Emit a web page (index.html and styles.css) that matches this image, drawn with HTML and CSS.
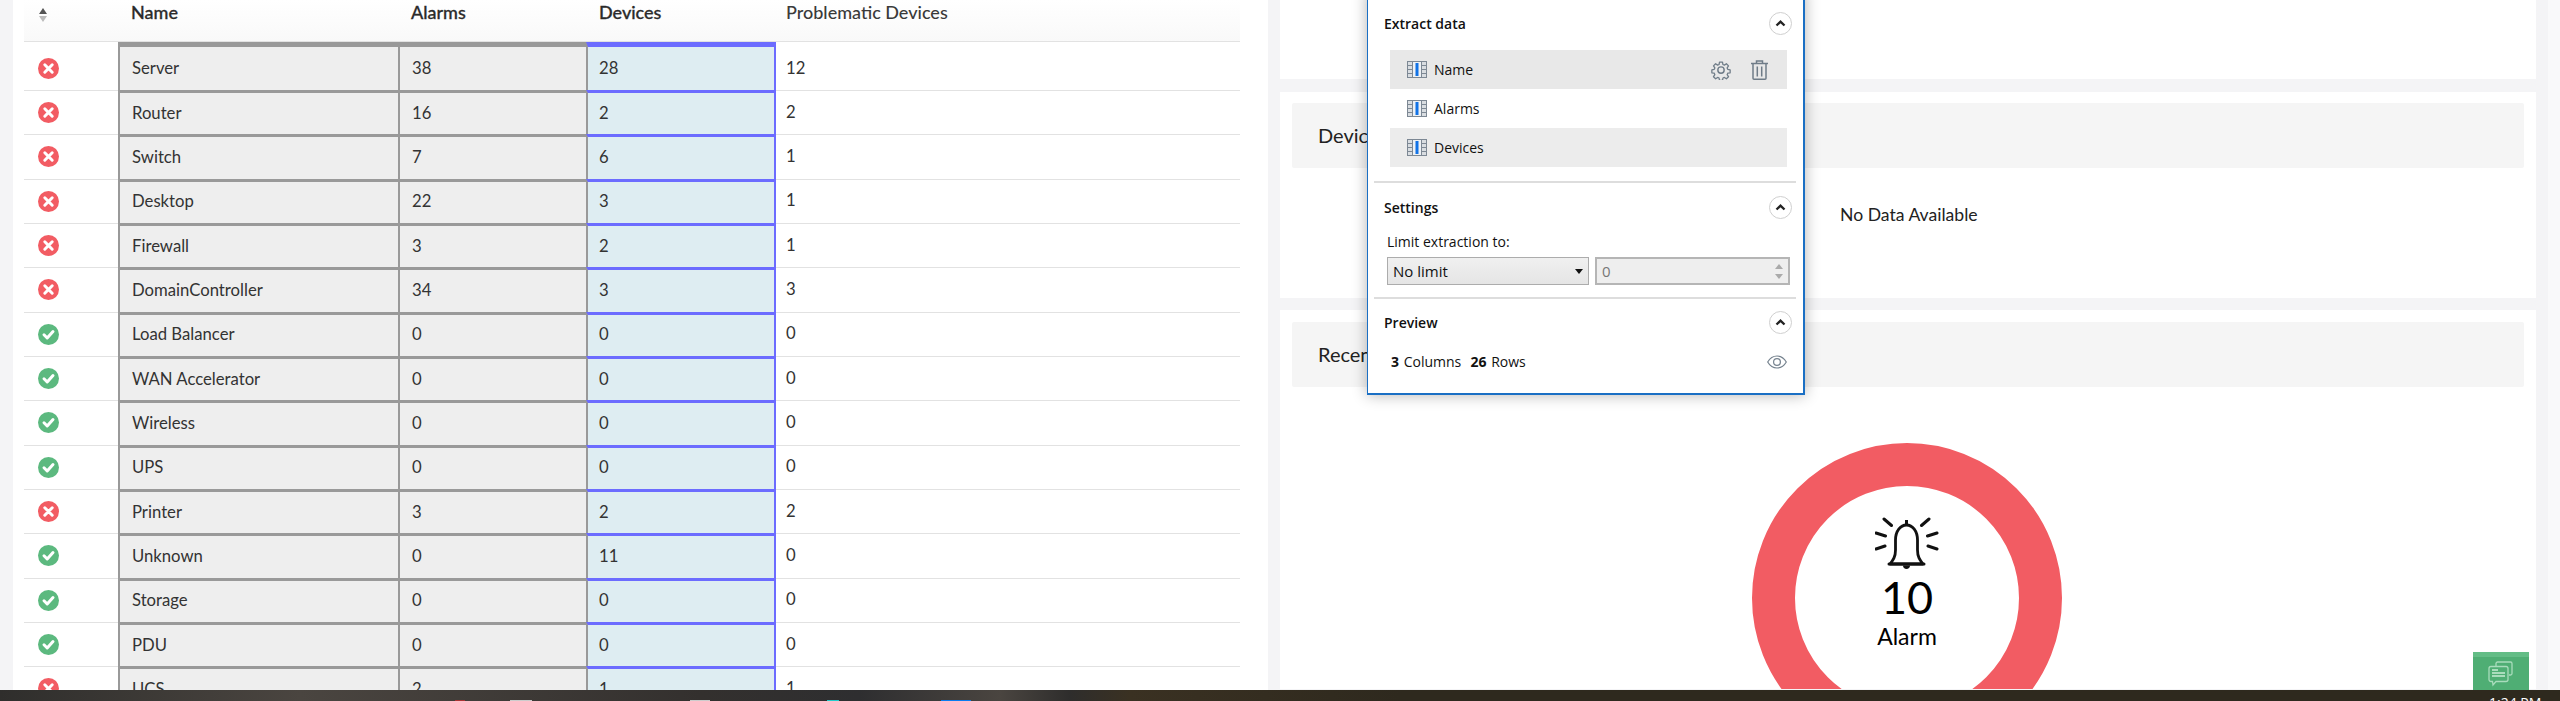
FILE: index.html
```html
<!DOCTYPE html>
<html lang="en">
<head>
    <meta charset="UTF-8">
    <title>Device Summary</title>
    <link rel="stylesheet" href="styles.css">
</head>
<body>
    <svg class="sprites" width="0" height="0">
        <symbol id="icon-bad" viewBox="0 0 21 21">
            <circle cx="10.5" cy="10.5" r="10.5" fill="#f25c63"/>
            <path d="M6.8 6.8l7.4 7.4M14.2 6.8l-7.4 7.4" stroke="#fff" stroke-width="3" stroke-linecap="round"/>
        </symbol>
        <symbol id="icon-ok" viewBox="0 0 21 21">
            <circle cx="10.5" cy="10.5" r="10.5" fill="#5cb97f"/>
            <path d="M6 10.8l3.2 3.2 5.8-6.4" fill="none" stroke="#fff" stroke-width="3" stroke-linecap="round" stroke-linejoin="round"/>
        </symbol>
        <symbol id="icon-col" viewBox="0 0 20 17">
            <rect width="20" height="17" fill="#7d8894"/>
            <path d="M1 1h4v3H1zM1 5h4v3H1zM1 9h4v3H1zM1 13h4v3H1zM15 1h4v3h-4zM15 5h4v3h-4zM15 9h4v3h-4zM15 13h4v3h-4z" fill="#d9dde1"/>
            <rect x="6" y="1" width="8" height="15" fill="#eef1f4"/>
            <rect x="8.500" y="2" width="3" height="13" fill="#1273e6"/>
        </symbol>
        <symbol id="icon-up" viewBox="0 0 23 23">
            <circle cx="11.500" cy="11.500" r="11" fill="#fff" stroke="#cfcfcf"/>
            <path d="M7.500 13.500l4-3.800 4 3.800" fill="none" stroke="#222" stroke-width="2.400"/>
        </symbol>
    </svg>

    <div class="page">
        <section class="card-left">
            <div class="table-head">
                <div class="col-status">
                    <svg class="sort-icon" width="8" height="14" viewBox="0 0 8 14"><path d="M4 0l4 6H0z" fill="#555"/><path d="M4 14l4-6H0z" fill="#bbb"/></svg>
                </div>
                <div class="col-name">Name</div>
                <div class="col-alarms">Alarms</div>
                <div class="col-devices">Devices</div>
                <div class="col-problem head-light">Problematic Devices</div>
            </div>

            <div class="row row-first">
                <div class="col-status"><svg class="status-icon"><use href="#icon-bad"/></svg></div>
                <div class="col-name picked">Server</div>
                <div class="col-alarms picked">38</div>
                <div class="col-devices picked-blue">28</div>
                <div class="col-problem">12</div>
            </div>
            <div class="row">
                <div class="col-status"><svg class="status-icon"><use href="#icon-bad"/></svg></div>
                <div class="col-name picked">Router</div>
                <div class="col-alarms picked">16</div>
                <div class="col-devices picked-blue">2</div>
                <div class="col-problem">2</div>
            </div>
            <div class="row">
                <div class="col-status"><svg class="status-icon"><use href="#icon-bad"/></svg></div>
                <div class="col-name picked">Switch</div>
                <div class="col-alarms picked">7</div>
                <div class="col-devices picked-blue">6</div>
                <div class="col-problem">1</div>
            </div>
            <div class="row">
                <div class="col-status"><svg class="status-icon"><use href="#icon-bad"/></svg></div>
                <div class="col-name picked">Desktop</div>
                <div class="col-alarms picked">22</div>
                <div class="col-devices picked-blue">3</div>
                <div class="col-problem">1</div>
            </div>
            <div class="row">
                <div class="col-status"><svg class="status-icon"><use href="#icon-bad"/></svg></div>
                <div class="col-name picked">Firewall</div>
                <div class="col-alarms picked">3</div>
                <div class="col-devices picked-blue">2</div>
                <div class="col-problem">1</div>
            </div>
            <div class="row">
                <div class="col-status"><svg class="status-icon"><use href="#icon-bad"/></svg></div>
                <div class="col-name picked">DomainController</div>
                <div class="col-alarms picked">34</div>
                <div class="col-devices picked-blue">3</div>
                <div class="col-problem">3</div>
            </div>
            <div class="row">
                <div class="col-status"><svg class="status-icon"><use href="#icon-ok"/></svg></div>
                <div class="col-name picked">Load Balancer</div>
                <div class="col-alarms picked">0</div>
                <div class="col-devices picked-blue">0</div>
                <div class="col-problem">0</div>
            </div>
            <div class="row">
                <div class="col-status"><svg class="status-icon"><use href="#icon-ok"/></svg></div>
                <div class="col-name picked">WAN Accelerator</div>
                <div class="col-alarms picked">0</div>
                <div class="col-devices picked-blue">0</div>
                <div class="col-problem">0</div>
            </div>
            <div class="row">
                <div class="col-status"><svg class="status-icon"><use href="#icon-ok"/></svg></div>
                <div class="col-name picked">Wireless</div>
                <div class="col-alarms picked">0</div>
                <div class="col-devices picked-blue">0</div>
                <div class="col-problem">0</div>
            </div>
            <div class="row">
                <div class="col-status"><svg class="status-icon"><use href="#icon-ok"/></svg></div>
                <div class="col-name picked">UPS</div>
                <div class="col-alarms picked">0</div>
                <div class="col-devices picked-blue">0</div>
                <div class="col-problem">0</div>
            </div>
            <div class="row">
                <div class="col-status"><svg class="status-icon"><use href="#icon-bad"/></svg></div>
                <div class="col-name picked">Printer</div>
                <div class="col-alarms picked">3</div>
                <div class="col-devices picked-blue">2</div>
                <div class="col-problem">2</div>
            </div>
            <div class="row">
                <div class="col-status"><svg class="status-icon"><use href="#icon-ok"/></svg></div>
                <div class="col-name picked">Unknown</div>
                <div class="col-alarms picked">0</div>
                <div class="col-devices picked-blue">11</div>
                <div class="col-problem">0</div>
            </div>
            <div class="row">
                <div class="col-status"><svg class="status-icon"><use href="#icon-ok"/></svg></div>
                <div class="col-name picked">Storage</div>
                <div class="col-alarms picked">0</div>
                <div class="col-devices picked-blue">0</div>
                <div class="col-problem">0</div>
            </div>
            <div class="row">
                <div class="col-status"><svg class="status-icon"><use href="#icon-ok"/></svg></div>
                <div class="col-name picked">PDU</div>
                <div class="col-alarms picked">0</div>
                <div class="col-devices picked-blue">0</div>
                <div class="col-problem">0</div>
            </div>
            <div class="row">
                <div class="col-status"><svg class="status-icon"><use href="#icon-bad"/></svg></div>
                <div class="col-name picked">UCS</div>
                <div class="col-alarms picked">2</div>
                <div class="col-devices picked-blue">1</div>
                <div class="col-problem">1</div>
            </div>
        </section>

        <section class="column-right">
            <div class="card card-top"></div>
            <div class="card card-devices">
                <div class="band">Devices Summary</div>
                <div class="no-data">No Data Available</div>
            </div>
            <div class="card card-recent">
                <div class="band">Recent Alarms</div>
                <div class="ring">
                    <svg class="bell" width="64" height="52" viewBox="0 0 64 52">
                        <path d="M31.500 3v5" fill="none" stroke="#111" stroke-width="3"/>
                        <path d="M15 47c3-4 5.500-7 5.500-14V23c0-9 5-15 11-15s11 6 11 15v10c0 7 2.500 10 5.500 14z" fill="none" stroke="#111" stroke-width="2.800" stroke-linejoin="round"/>
                        <path d="M14 47h35" stroke="#111" stroke-width="3" stroke-linecap="round"/>
                        <path d="M28 48.500h7c0 2-1.500 3.500-3.500 3.500s-3.500-1.500-3.500-3.500z" fill="#111"/>
                        <path d="M9 2l7.500 6.500M54 2l-7.500 6.500M1 16l9.500 3M62 16l-9.500 3M1 32l9-3M62 32l-9-3" fill="none" stroke="#111" stroke-width="3" stroke-linecap="round"/>
                    </svg>
                    <div class="ring-count">10</div>
                    <div class="ring-label">Alarm</div>
                </div>
            </div>
        </section>
    </div>

    <!-- extractor panel sits on top of the dashboard -->
    <aside class="extract-panel">
        <div class="panel-head panel-head-extract">
            <span>Extract data</span>
            <svg class="toggle"><use href="#icon-up"/></svg>
        </div>
        <ul class="field-list">
            <li class="field field-hover">
                <svg class="field-icon"><use href="#icon-col"/></svg>
                <span class="field-name">Name</span>
                <svg class="tool-gear" width="20" height="20" viewBox="0 0 24 24" fill="none" stroke="#6f7c88" stroke-width="1.700" stroke-linejoin="round">
                    <circle cx="12" cy="12" r="3.800"/>
                    <path d="M10 1.500h4l.6 3.200 1.900.8 2.700-1.800 2.800 2.800-1.800 2.700.8 1.900 3.200.6v4l-3.200.6-.8 1.900 1.800 2.700-2.800 2.800-2.700-1.800-1.900.8-.6 3.200h-4l-.6-3.200-1.900-.8-2.700 1.800-2.800-2.800 1.800-2.700-.8-1.900-3.200-.6v-4l3.200-.6.800-1.900-1.800-2.700 2.800-2.800 2.700 1.800 1.900-.8z" transform="translate(1.200 1.200) scale(.9)"/>
                </svg>
                <svg class="tool-trash" width="17" height="20" viewBox="0 0 17 20" fill="none" stroke="#6f7c88" stroke-width="1.500">
                    <path d="M0 3.500h17M5.500 3.500V1h6v2.500M2 3.500v14.700c0 .6.400 1 1 1h11c.6 0 1-.4 1-1V3.500M6.300 6.500v10M10.700 6.500v10"/>
                </svg>
            </li>
            <li class="field">
                <svg class="field-icon"><use href="#icon-col"/></svg>
                <span class="field-name">Alarms</span>
            </li>
            <li class="field field-alt">
                <svg class="field-icon"><use href="#icon-col"/></svg>
                <span class="field-name">Devices</span>
            </li>
        </ul>
        <div class="panel-divider"></div>
        <div class="panel-head panel-head-settings">
            <span>Settings</span>
            <svg class="toggle"><use href="#icon-up"/></svg>
        </div>
        <div class="limit">
            <div class="limit-label">Limit extraction to:</div>
            <div class="limit-controls">
                <div class="fake-select">No limit<span class="select-arrow"></span></div>
                <div class="fake-number">0<span class="spin"><i class="spin-up"></i><i class="spin-down"></i></span></div>
            </div>
        </div>
        <div class="panel-divider panel-divider-2"></div>
        <div class="panel-head panel-head-preview">
            <span>Preview</span>
            <svg class="toggle"><use href="#icon-up"/></svg>
        </div>
        <div class="preview">
            <span><b>3</b> Columns &nbsp;<b>26</b> Rows</span>
            <svg width="20" height="14" viewBox="0 0 20 14" fill="none" stroke="#76838f" stroke-width="1.200">
                <path d="M.7 7C3 3 6.200 1 10 1s7 2 9.300 6c-2.300 4-5.500 6-9.300 6S3 11 .7 7z"/>
                <circle cx="10" cy="7" r="3.400"/>
            </svg>
        </div>
    </aside>

    <div class="chat-widget">
        <svg width="28" height="28" viewBox="0 0 28 28" fill="none" stroke="#a9dcbc" stroke-width="1.300">
            <path d="M9 6V3.500C9 2.500 9.800 2 10.500 2h13c1 0 1.500.7 1.500 1.500v10c0 1-.7 1.500-1.500 1.500H22"/>
            <path d="M4 6.500h15c1 0 2 .8 2 2v11c0 1-.8 2-2 2H9l-3 3.500-.5-3.500H4c-1 0-2-.8-2-2v-11c0-1.200 1-2 2-2z"/>
            <path d="M5 10h6M5 13h13M5 16h13" stroke-width="1.800"/>
        </svg>
    </div>

    <footer class="taskbar">
        <span class="task-mark mark-red"></span>
        <span class="task-mark mark-white"></span>
        <span class="task-mark mark-white-2"></span>
        <span class="task-mark mark-cyan"></span>
        <span class="task-mark mark-blue"></span>
        <span class="clock">1:24 PM</span>
    </footer>
</body>
</html>
```

FILE: styles.css
```css
html, body {
    margin: 0;
    padding: 0;
    height: 701px;
    overflow: hidden;
}
body {
    background: linear-gradient(90deg, #f4f4f6 2548px, #f9f9fa 2548px);
    font-family: 'Lato', sans-serif;
    color: #333;
    position: relative;
}
.sprites {
    position: absolute;
}
.page {
    display: flex;
    height: 701px;
    padding: 0 24px 0 13px;
    gap: 12px;
    box-sizing: border-box;
}

/* left table */
.card-left {
    width: 1255px;
    background-color: #fff;
    padding: 0 28px 0 11px;
    box-sizing: border-box;
    flex-shrink: 0;
}
.table-head {
    display: flex;
    height: 41px;
    background: linear-gradient(#fff, #f9f9f9);
    font-size: 18px;
    font-weight: 500;
    -webkit-text-stroke: 0.3px #2b2b2b;
    line-height: 25px;
    color: #2b2b2b;
}
.table-head .head-light {
    -webkit-text-stroke: 0;
    color: #3a3a3a;
}
.row {
    display: flex;
    height: 44.33px;
    box-sizing: border-box;
    border-top: 1px solid #e2e2e2;
    font-size: 16.7px;
    align-items: stretch;
}
.row-first {
    height: 49px;
}
.col-status {
    width: 94px;
    display: flex;
    align-items: center;
    padding-left: 14px;
    box-sizing: border-box;
}
.col-name, .col-alarms, .col-devices, .col-problem {
    display: flex;
    align-items: center;
    box-sizing: border-box;
    padding-bottom: 2px;
}
.col-name {
    width: 280px;
    padding-left: 13px;
}
.col-alarms {
    width: 188px;
    padding-left: 13px;
}
.col-devices {
    width: 188px;
    padding-left: 13px;
}
.col-problem {
    flex: 1;
    padding-left: 12px;
}
.table-head div {
    align-items: flex-start;
}
.table-head .col-status {
    padding: 8px 0 0 15px;
}
.sort-icon {
    display: block;
}
.status-icon {
    width: 21px;
    height: 21px;
}
.picked {
    background-color: #eee;
    border-top: 3px solid #999;
    border-left: 2px solid #999;
    margin-top: -1px;
    padding-left: 12px;
}
.picked-blue {
    background-color: #deedf2;
    border-top: 3px solid #6c6cff;
    border-left: 2px solid #999;
    border-right: 2px solid #6c6cff;
    margin-top: -1px;
    padding-left: 11px;
    width: 190px;
}
.picked-blue + .col-problem {
    padding-left: 10px;
}
.row-first .picked, .row-first .picked-blue {
    border-top-width: 5px;
    margin-top: 0;
}
.row-first .col-status, .row-first .col-problem {
    padding-top: 5px;
}

/* right column */
.column-right {
    flex: 1;
    display: flex;
    flex-direction: column;
}
.card {
    background-color: #fff;
    padding: 0 12px;
    margin-bottom: 12px;
}
.card-top {
    height: 79px;
    padding: 0;
    margin-bottom: 13px;
}
.card-devices {
    height: 206px;
    padding-top: 11px;
    box-sizing: border-box;
}
.card-recent {
    flex: 1;
    padding-top: 12px;
    overflow: hidden;
}
.band {
    background-color: #f5f5f5;
    border-radius: 2px;
    height: 65px;
    line-height: 65px;
    padding-left: 26px;
    font-size: 20px;
    color: #222;
}
.no-data {
    margin-left: 548px;
    margin-top: 36px;
    font-size: 17.6px;
    color: #222;
}
.ring {
    width: 310px;
    height: 310px;
    box-sizing: border-box;
    border: 43px solid #f25c63;
    border-radius: 50%;
    margin: 56px 0 0 460px;
    display: flex;
    flex-direction: column;
    align-items: center;
    padding-top: 31px;
    color: #000;
}
.bell {
    display: block;
}
.ring-count {
    font-size: 45px;
    line-height: 50px;
    margin-top: 3px;
}
.ring-label {
    font-size: 23px;
    line-height: 28px;
}

/* extractor panel */
.extract-panel {
    position: absolute;
    left: 1367px;
    top: -10px;
    width: 438px;
    height: 405px;
    box-sizing: border-box;
    background-color: #fff;
    border-left: 1px solid #1a6fc4;
    border-right: 2px solid #1a6fc4;
    border-bottom: 2px solid #1a6fc4;
    box-shadow: 0 0 14px rgba(0,0,0,0.3);
    font-family: 'Open Sans', sans-serif;
    font-size: 14px;
    color: #111;
}
.panel-head {
    display: flex;
    justify-content: space-between;
    align-items: center;
    height: 24px;
    margin: 0 11px 0 16px;
    font-weight: 600;
}
.panel-head-extract {
    margin-top: 21px;
}
.toggle {
    width: 23px;
    height: 23px;
}
.field-list {
    list-style: none;
    margin: 0;
    padding: 15px 0 0;
}
.field {
    display: flex;
    align-items: center;
    height: 39px;
    margin: 0 16px 0 22px;
    padding-left: 17px;
}
.field-hover {
    background-color: #e8e8e8;
}
.field-alt {
    background-color: #ececec;
}
.field-icon {
    width: 20px;
    height: 17px;
    margin-right: 7px;
}
.field-name {
    flex: 1;
}
.tool-gear {
    margin-right: 20px;
}
.tool-trash {
    margin-right: 19px;
}
.panel-divider {
    height: 2px;
    background-color: #ddd;
    margin: 14px 7px 0 6px;
}
.panel-head-settings {
    margin-top: 12px;
}
.limit {
    margin: 14px 13px 0 19px;
}
.limit-label {
    line-height: 18px;
}
.limit-controls {
    display: flex;
    gap: 6px;
    margin-top: 6px;
}
.fake-select, .fake-number {
    height: 28px;
    line-height: 26px;
    box-sizing: border-box;
    border: 1px solid #acacac;
    padding-left: 5px;
    display: flex;
    justify-content: space-between;
    align-items: center;
    font-size: 15px;
}
.fake-select {
    width: 202px;
    background: linear-gradient(#f0f0f0, #e5e5e5);
}
.select-arrow {
    width: 0;
    height: 0;
    border-left: 4px solid transparent;
    border-right: 4px solid transparent;
    border-top: 5px solid #111;
    margin-right: 5px;
}
.fake-number {
    flex: 1;
    background-color: #eee;
    color: #777;
    border-width: 2px;
    border-color: #b5b5b5;
}
.spin {
    display: flex;
    flex-direction: column;
    gap: 5px;
    margin-right: 5px;
}
.spin i {
    display: block;
    width: 0;
    height: 0;
    border-left: 4px solid transparent;
    border-right: 4px solid transparent;
}
.spin-up {
    border-bottom: 5px solid #aaa;
}
.spin-down {
    border-top: 5px solid #aaa;
}
.panel-divider-2 {
    margin-top: 12px;
}
.panel-head-preview {
    margin-top: 11px;
}
.preview {
    display: flex;
    justify-content: space-between;
    align-items: center;
    margin: 18px 16px 0 23px;
    line-height: 20px;
    word-spacing: 1px;
}

/* bottom right */
.chat-widget {
    position: absolute;
    left: 2473px;
    top: 652px;
    width: 56px;
    height: 38px;
    background-color: #4fae74;
    border-top: 5px solid #63bd86;
    box-sizing: border-box;
    display: flex;
    justify-content: center;
    padding-top: 3px;
}
.taskbar {
    position: absolute;
    left: 0;
    right: 0;
    top: 690px;
    height: 11px;
    overflow: hidden;
    background: linear-gradient(90deg, #2f2e2c 0, #4a4540 300px, #33302e 700px, #2e2e30 860px, #4a4540 1000px, #2e2d2c 1070px, #3a3122 1130px, #2e291e 1400px, #2e291e 100%);
}
.task-mark {
    position: absolute;
    top: 10px;
    height: 1px;
}
.mark-red {
    left: 455px;
    width: 10px;
    background-color: #a33;
}
.mark-white {
    left: 510px;
    width: 22px;
    background-color: #ccc;
}
.mark-white-2 {
    left: 690px;
    width: 20px;
    background-color: #ccc;
}
.mark-cyan {
    left: 827px;
    width: 12px;
    background-color: #2cc;
}
.mark-blue {
    left: 941px;
    width: 30px;
    background-color: #0a7cf0;
}
.clock {
    position: absolute;
    left: 2489px;
    top: 4px;
    color: #fff;
    font-family: 'Open Sans', sans-serif;
    font-size: 14px;
    line-height: 18px;
    white-space: nowrap;
}
```
